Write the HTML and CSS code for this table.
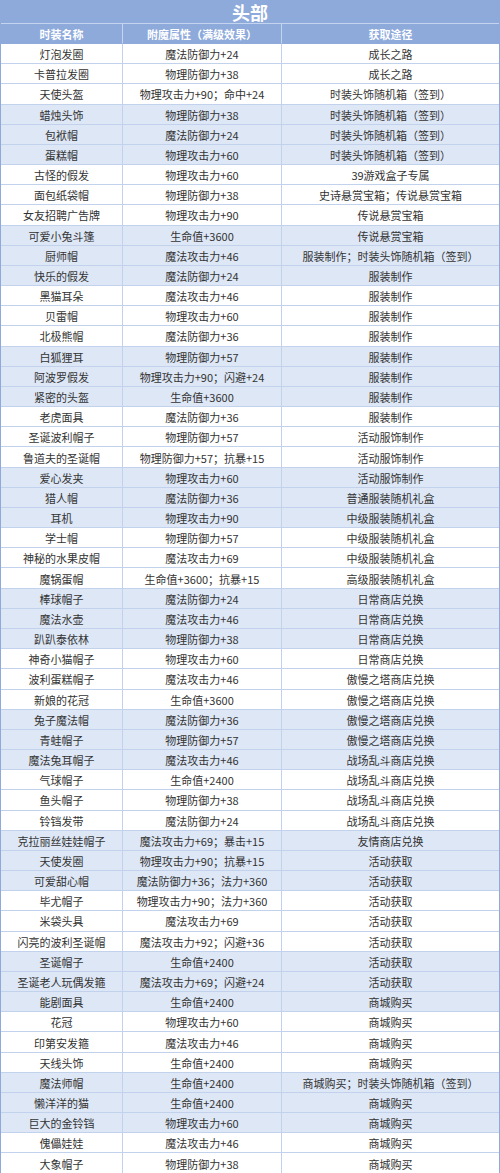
FILE: index.html
```html
<!DOCTYPE html>
<html lang="zh">
<head>
<meta charset="utf-8">
<link rel="stylesheet" href="styles.css">
</head>
<body>
<div class="sheet">
  <div class="title">头部</div>
  <div class="row head"><div>时装名称</div><div>附魔属性（满级效果）</div><div>获取途径</div></div>
  <div class="row"><div>灯泡发圈</div><div>魔法防御力+24</div><div>成长之路</div></div>
  <div class="row"><div>卡普拉发圈</div><div>物理防御力+38</div><div>成长之路</div></div>
  <div class="row"><div>天使头盔</div><div>物理攻击力+90；命中+24</div><div>时装头饰随机箱（签到）</div></div>
  <div class="row band"><div>蜡烛头饰</div><div>物理防御力+38</div><div>时装头饰随机箱（签到）</div></div>
  <div class="row band"><div>包袱帽</div><div>魔法防御力+24</div><div>时装头饰随机箱（签到）</div></div>
  <div class="row band"><div>蛋糕帽</div><div>物理攻击力+60</div><div>时装头饰随机箱（签到）</div></div>
  <div class="row"><div>古怪的假发</div><div>物理攻击力+60</div><div>39游戏盒子专属</div></div>
  <div class="row"><div>面包纸袋帽</div><div>物理防御力+38</div><div>史诗悬赏宝箱；传说悬赏宝箱</div></div>
  <div class="row"><div>女友招聘广告牌</div><div>物理攻击力+90</div><div>传说悬赏宝箱</div></div>
  <div class="row band"><div>可爱小兔斗篷</div><div>生命值+3600</div><div>传说悬赏宝箱</div></div>
  <div class="row band"><div>厨师帽</div><div>魔法攻击力+46</div><div>服装制作；时装头饰随机箱（签到）</div></div>
  <div class="row band"><div>快乐的假发</div><div>魔法防御力+24</div><div>服装制作</div></div>
  <div class="row"><div>黑猫耳朵</div><div>魔法攻击力+46</div><div>服装制作</div></div>
  <div class="row"><div>贝雷帽</div><div>物理攻击力+60</div><div>服装制作</div></div>
  <div class="row"><div>北极熊帽</div><div>魔法防御力+36</div><div>服装制作</div></div>
  <div class="row band"><div>白狐狸耳</div><div>物理防御力+57</div><div>服装制作</div></div>
  <div class="row band"><div>阿波罗假发</div><div>物理攻击力+90；闪避+24</div><div>服装制作</div></div>
  <div class="row band"><div>紧密的头盔</div><div>生命值+3600</div><div>服装制作</div></div>
  <div class="row"><div>老虎面具</div><div>魔法防御力+36</div><div>服装制作</div></div>
  <div class="row"><div>圣诞波利帽子</div><div>物理防御力+57</div><div>活动服饰制作</div></div>
  <div class="row"><div>鲁道夫的圣诞帽</div><div>物理防御力+57；抗暴+15</div><div>活动服饰制作</div></div>
  <div class="row band"><div>爱心发夹</div><div>物理攻击力+60</div><div>活动服饰制作</div></div>
  <div class="row band"><div>猎人帽</div><div>魔法防御力+36</div><div>普通服装随机礼盒</div></div>
  <div class="row band"><div>耳机</div><div>物理攻击力+90</div><div>中级服装随机礼盒</div></div>
  <div class="row"><div>学士帽</div><div>物理防御力+57</div><div>中级服装随机礼盒</div></div>
  <div class="row"><div>神秘的水果皮帽</div><div>魔法攻击力+69</div><div>中级服装随机礼盒</div></div>
  <div class="row"><div>魔锅蛋帽</div><div>生命值+3600；抗暴+15</div><div>高级服装随机礼盒</div></div>
  <div class="row band"><div>棒球帽子</div><div>魔法防御力+24</div><div>日常商店兑换</div></div>
  <div class="row band"><div>魔法水壶</div><div>魔法攻击力+46</div><div>日常商店兑换</div></div>
  <div class="row band"><div>趴趴泰依林</div><div>物理防御力+38</div><div>日常商店兑换</div></div>
  <div class="row"><div>神奇小猫帽子</div><div>物理攻击力+60</div><div>日常商店兑换</div></div>
  <div class="row"><div>波利蛋糕帽子</div><div>魔法攻击力+46</div><div>傲慢之塔商店兑换</div></div>
  <div class="row"><div>新娘的花冠</div><div>生命值+3600</div><div>傲慢之塔商店兑换</div></div>
  <div class="row band"><div>兔子魔法帽</div><div>魔法防御力+36</div><div>傲慢之塔商店兑换</div></div>
  <div class="row band"><div>青蛙帽子</div><div>物理防御力+57</div><div>傲慢之塔商店兑换</div></div>
  <div class="row band"><div>魔法兔耳帽子</div><div>魔法攻击力+46</div><div>战场乱斗商店兑换</div></div>
  <div class="row"><div>气球帽子</div><div>生命值+2400</div><div>战场乱斗商店兑换</div></div>
  <div class="row"><div>鱼头帽子</div><div>物理防御力+38</div><div>战场乱斗商店兑换</div></div>
  <div class="row"><div>铃铛发带</div><div>魔法防御力+24</div><div>战场乱斗商店兑换</div></div>
  <div class="row band"><div>克拉丽丝娃娃帽子</div><div>魔法攻击力+69；暴击+15</div><div>友情商店兑换</div></div>
  <div class="row band"><div>天使发圈</div><div>物理攻击力+90；抗暴+15</div><div>活动获取</div></div>
  <div class="row band"><div>可爱甜心帽</div><div>魔法防御力+36；法力+360</div><div>活动获取</div></div>
  <div class="row"><div>毕尤帽子</div><div>物理攻击力+90；法力+360</div><div>活动获取</div></div>
  <div class="row"><div>米袋头具</div><div>魔法攻击力+69</div><div>活动获取</div></div>
  <div class="row"><div>闪亮的波利圣诞帽</div><div>魔法攻击力+92；闪避+36</div><div>活动获取</div></div>
  <div class="row band"><div>圣诞帽子</div><div>生命值+2400</div><div>活动获取</div></div>
  <div class="row band"><div>圣诞老人玩偶发箍</div><div>魔法攻击力+69；闪避+24</div><div>活动获取</div></div>
  <div class="row band"><div>能剧面具</div><div>生命值+2400</div><div>商城购买</div></div>
  <div class="row"><div>花冠</div><div>物理攻击力+60</div><div>商城购买</div></div>
  <div class="row"><div>印第安发箍</div><div>魔法攻击力+46</div><div>商城购买</div></div>
  <div class="row"><div>天线头饰</div><div>生命值+2400</div><div>商城购买</div></div>
  <div class="row band"><div>魔法师帽</div><div>生命值+2400</div><div>商城购买；时装头饰随机箱（签到）</div></div>
  <div class="row band"><div>懒洋洋的猫</div><div>生命值+2400</div><div>商城购买</div></div>
  <div class="row band"><div>巨大的金铃铛</div><div>物理攻击力+60</div><div>商城购买</div></div>
  <div class="row"><div>傀儡娃娃</div><div>魔法攻击力+46</div><div>商城购买</div></div>
  <div class="row"><div>大象帽子</div><div>物理防御力+38</div><div>商城购买</div></div>
</div>
</body>
</html>
```
FILE: styles.css
```css
* { box-sizing: border-box; }
html, body { margin: 0; padding: 0; background: #ffffff; }
body {
  font-family: "Noto Sans CJK SC", "Noto Sans", sans-serif;
  font-size: 11px;
  color: #333333;
}
.sheet {
  width: 500px;
  border-left: 1px solid #8eaadb;
  border-right: 1px solid #8eaadb;
  border-top: 1px solid #8eaadb;
}
.title {
  height: 23px;
  background: #8eaadb;
  color: #ffffff;
  font-weight: bold;
  font-size: 18px;
  line-height: 22px;
  text-align: center;
  border-bottom: 1px solid #c5d4ee;
}
.row {
  display: grid;
  grid-template-columns: 122px 159px 1fr;
  height: 20.18px;
}
.row > div {
  display: flex;
  align-items: center;
  justify-content: center;
  white-space: nowrap;
  border-bottom: 1px solid #c3d2ec;
  border-right: 1px solid #c3d2ec;
  padding-top: 1px;
}
.row > div:last-child { border-right: none; }
.row.band > div { background: #dde7f6; }
.row.head { height: 20px; }
.row.head > div {
  background: #8eaadb;
  color: #ffffff;
  font-weight: bold;
  border-right-color: #c5d4ee;
  border-bottom-color: #8eaadb;
}
```
